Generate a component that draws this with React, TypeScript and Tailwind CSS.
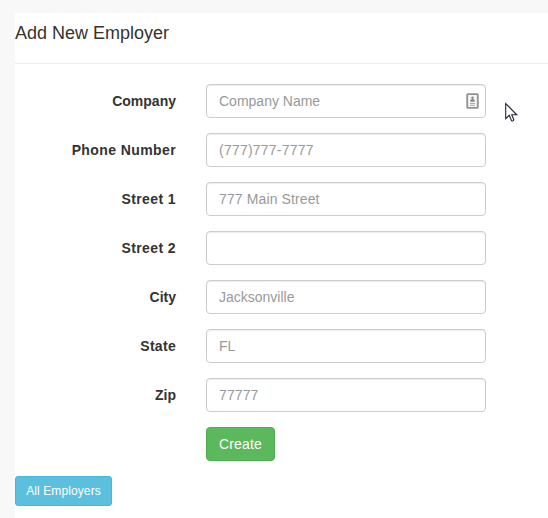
type Field = { id: string; label: string; placeholder: string; spacing: string; contact?: boolean };

const fields: Field[] = [
  { id: "company", label: "Company", placeholder: "Company Name", spacing: "", contact: true },
  { id: "phone", label: "Phone Number", placeholder: "(777)777-7777", spacing: "tracking-[0.4px]" },
  { id: "street1", label: "Street 1", placeholder: "777 Main Street", spacing: "tracking-[0.4px]" },
  { id: "street2", label: "Street 2", placeholder: "", spacing: "tracking-[0.4px]" },
  { id: "city", label: "City", placeholder: "Jacksonville", spacing: "" },
  { id: "state", label: "State", placeholder: "FL", spacing: "tracking-[0.3px]" },
  { id: "zip", label: "Zip", placeholder: "77777", spacing: "" },
];

function ContactIcon() {
  return (
    <svg className="pointer-events-none absolute top-[9px] right-[7px]" width="13" height="16" viewBox="0 0 13 16" fill="none">
      <rect x="1.2" y="1.2" width="10.6" height="13.6" rx="0.6" fill="#f5f5f5" stroke="#929292" strokeWidth="1.8" />
      <circle cx="6.5" cy="4.8" r="1.2" fill="#858585" />
      <path d="M4.3 8.7V7.2l1.3-1.2h1.8l1.3 1.2v1.5z" fill="#858585" />
      <path d="M4 10.5h5M4 12.3h5" stroke="#aaa" />
    </svg>
  );
}

function Cursor() {
  return (
    <svg className="pointer-events-none absolute top-[102px] left-[505px]" width="14" height="21" viewBox="0 0 14 21">
      <path d="M.7 1.5v15.2l3.6-3.4 2.2 5.3c.8.8 2.3.2 2.3-.9l-2.1-4.9h5.1z" fill="#fff" stroke="#25253a" strokeWidth="1.1" />
    </svg>
  );
}

export default function App() {
  return (
    <div className="relative h-[518px] w-full overflow-hidden bg-[#f8f8f8] pt-[13px] pl-[15px] font-['Liberation_Sans',Arial,sans-serif] text-sm text-[#333]">
      <main className="h-full bg-white">
        <h1 className="h-[51px] border-b border-[#eee] pt-[10px] text-lg leading-5">Add New Employer</h1>
        <form className="flex flex-col gap-[15px] pt-5" onSubmit={(e) => e.preventDefault()}>
          {fields.map((field) => (
            <div key={field.id} className="flex h-[34px] items-center gap-[30px]">
              <label htmlFor={field.id} className={`w-[161px] text-right leading-5 font-bold whitespace-nowrap ${field.spacing}`}>
                {field.label}
              </label>
              <div className="relative w-[280px]">
                <input
                  id={field.id}
                  placeholder={field.placeholder}
                  className={`block h-[34px] w-full rounded border border-[#ccc] bg-white px-3 py-1.5 leading-5 shadow-[inset_0_1px_1px_rgba(0,0,0,0.075)] placeholder:text-[#999] ${field.id === "phone" ? "tracking-[0.22px]" : field.id === "street1" || field.id === "zip" ? "tracking-[0.12px]" : ""}`}
                />
                {field.contact && <ContactIcon />}
              </div>
            </div>
          ))}
          <button className="ml-[191px] h-[34px] w-[69px] rounded border border-[#4cae4c] bg-[#5cb85c] leading-5 tracking-[0.2px] text-white">
            Create
          </button>
        </form>
        <button className="mt-[15px] h-[30px] w-[97px] rounded-[3px] border border-[#46b8da] bg-[#5bc0de] text-xs leading-[18px] tracking-[0.1px] whitespace-nowrap text-white">
          All Employers
        </button>
      </main>
      <Cursor />
    </div>
  );
}
